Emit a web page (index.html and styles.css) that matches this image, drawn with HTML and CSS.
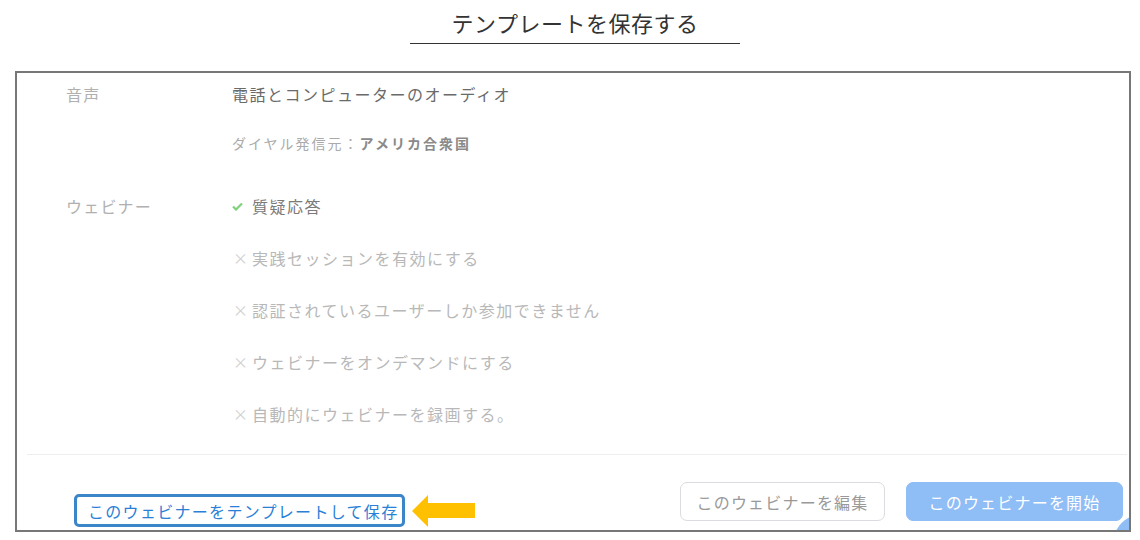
FILE: index.html
```html
<!DOCTYPE html>
<html lang="ja">
<head>
<meta charset="utf-8">
<link rel="stylesheet" href="styles.css">
</head>
<body>
<header class="title-wrap">
  <h1 class="title">テンプレートを保存する</h1>
</header>
<main class="frame">
  <section class="rows">
    <div class="row">
      <div class="label">音声</div>
      <div class="values">
        <div class="value strong-line">電話とコンピューターのオーディオ</div>
        <div class="value dial">ダイヤル発信元：<b>アメリカ合衆国</b></div>
      </div>
    </div>
    <div class="row webinar">
      <div class="label">ウェビナー</div>
      <ul class="options">
        <li class="opt on"><span class="mark"><svg width="11" height="9" viewBox="0 0 11 9"><polyline points="1,4.5 4,7.5 10,1.5" fill="none" stroke="#7fd27a" stroke-width="2.2"/></svg></span>質疑応答</li>
        <li class="opt"><span class="mark">&#215;</span>実践セッションを有効にする</li>
        <li class="opt"><span class="mark">&#215;</span>認証されているユーザーしか参加できません</li>
        <li class="opt"><span class="mark">&#215;</span>ウェビナーをオンデマンドにする</li>
        <li class="opt"><span class="mark">&#215;</span>自動的にウェビナーを録画する。</li>
      </ul>
    </div>
  </section>
  <div class="sep"></div>
  <footer class="actions">
    <div class="save-group">
      <a class="save-link">このウェビナーをテンプレートして保存</a>
      <svg class="arrow" width="64" height="32" viewBox="0 0 64 32"><polygon points="0,16 16,0 16,8 63,8 63,23 16,23 16,32" fill="#ffc000"/></svg>
    </div>
    <div class="buttons">
      <button class="btn btn-edit">このウェビナーを編集</button>
      <button class="btn btn-start">このウェビナーを開始</button>
    </div>
  </footer>
  <div class="fab"></div>
</main>
</body>
</html>
```

FILE: styles.css
```css
* { box-sizing: border-box; }
html, body { margin: 0; padding: 0; background: #fff; }
body {
  width: 1140px;
  height: 540px;
  overflow: hidden;
  font-family: "Noto Sans CJK JP", "Noto Sans", sans-serif;
}
.title-wrap {
  width: 330px;
  margin-left: 410px;
  height: 44px;
  border-bottom: 1px solid #333;
  display: flex;
  align-items: center;
  justify-content: center;
}
.title {
  margin: 0;
  font-size: 22px;
  font-weight: 400;
  color: #333;
  letter-spacing: 0.5px;
  line-height: 1;
  padding-top: 0;
}
.frame {
  position: relative;
  overflow: hidden;
  margin: 27px 0 0 15px;
  width: 1116px;
  height: 461px;
  border: 2px solid #777;
  display: flex;
  flex-direction: column;
}
.rows {
  padding: 10px 0 0 49px;
  display: flex;
  flex-direction: column;
}
.row {
  display: flex;
}
.label {
  width: 166px;
  font-size: 16px;
  letter-spacing: 1.2px;
  color: #b0b0b0;
  line-height: 22px;
}
.values { display: flex; flex-direction: column; }
.value {
  line-height: 22px;
}
.strong-line {
  font-size: 16px;
  letter-spacing: 1.5px;
  color: #6a6a6a;
}
.dial {
  margin-top: 27px;
  font-size: 14px;
  letter-spacing: 2px;
  color: #aaa;
}
.dial b { color: #8a8a8a; font-weight: 700; }
.webinar { margin-top: 41px; }
.options {
  list-style: none;
  margin: 0;
  padding: 0;
  display: flex;
  flex-direction: column;
  gap: 30px;
}
.opt {
  display: flex;
  align-items: center;
  font-size: 16px;
  letter-spacing: 1.5px;
  line-height: 22px;
  color: #b8b8b8;
}
.opt.on { color: #7a7a7a; }
.mark {
  width: 20px;
  font-size: 15px;
  color: #d0d0d0;
  letter-spacing: 0;
  padding-left: 1px;
  display: flex;
  align-items: center;
}
.mark svg { display: block; margin-left: -1px; }
.sep {
  margin: 29px 2px 0 10px;
  height: 1px;
  background: #eeeeee;
}
.actions {
  display: flex;
  justify-content: space-between;
  align-items: flex-end;
  padding: 0 6px 3px 57px;
  flex: 1;
}
.save-group {
  display: flex;
  align-items: center;
  gap: 7px;
}
.save-link {
  display: block;
  border: 3px solid #3a86c8;
  border-radius: 5px;
  padding: 2px 4px 1px 11px;
  font-size: 16px;
  letter-spacing: 1.3px;
  line-height: 24px;
  color: #2a7fd6;
}
.arrow { display: block; margin-top: 2px; }
.buttons {
  display: flex;
  gap: 21px;
  margin-bottom: 6px;
}
.btn {
  height: 39px;
  border-radius: 7px;
  font-family: inherit;
  font-size: 16px;
  letter-spacing: 1.2px;
  padding: 0;
}
.btn-edit {
  width: 205px;
  background: #fff;
  border: 1px solid #dcdce0;
  color: #999;
}
.btn-start {
  width: 217px;
  background: #8fbdf5;
  border: 1px solid #8fbdf5;
  color: #fff;
}
.fab {
  position: absolute;
  right: -44px;
  bottom: -44px;
  width: 60px;
  height: 60px;
  border-radius: 50%;
  background: #8fbdf5;
}
```
